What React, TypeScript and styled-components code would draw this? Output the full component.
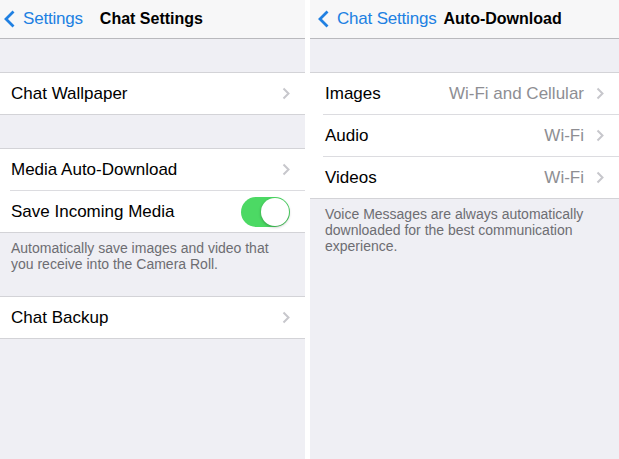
import styled, { createGlobalStyle } from 'styled-components';

const GlobalStyle = createGlobalStyle`
  html, body {
    margin: 0;
    padding: 0;
    background: #fff;
  }
  body {
    font-family: "Liberation Sans", Arial, sans-serif;
    -webkit-font-smoothing: antialiased;
  }
`;

const Screen = styled.div`
  display: flex;
  gap: 5px;
  width: 619px;
  height: 459px;
  background: #fff;
  overflow: hidden;
`;

const Panel = styled.section<{ $width?: number }>`
  flex: ${(p) => (p.$width ? `0 0 ${p.$width}px` : '1 1 auto')};
  display: flex;
  flex-direction: column;
  background: #efeff4;
  height: 100%;
`;

const NavBar = styled.header`
  height: 38px;
  flex-shrink: 0;
  display: flex;
  align-items: center;
  background: #f7f7f8;
  border-bottom: 1px solid #b9b9bd;
`;

const BackButton = styled.div<{ $left: number }>`
  display: flex;
  align-items: center;
  gap: 8px;
  padding-left: ${(p) => p.$left}px;
  color: #2080e2;
  font-size: 17px;
  letter-spacing: -0.2px;
`;

const NavTitle = styled.h1<{ $gap: number }>`
  margin: 0 0 0 ${(p) => p.$gap}px;
  font-size: 16px;
  font-weight: 700;
  color: #000;
`;

const Spacer = styled.div`
  height: 33px;
  flex-shrink: 0;
`;

const Group = styled.div`
  background: #fff;
  border-top: 1px solid #d3d3d7;
  border-bottom: 1px solid #d3d3d7;
`;

const Row = styled.div<{ $inset: number }>`
  height: 41px;
  display: flex;
  align-items: center;
  margin-left: ${(p) => p.$inset}px;
  padding-right: 15px;
  & + & {
    border-top: 1px solid #dcdce0;
  }
`;

const Label = styled.span<{ $pad: number }>`
  flex: 1;
  padding-left: ${(p) => p.$pad}px;
  font-size: 17px;
  color: #000;
`;

const Value = styled.span`
  font-size: 17px;
  color: #8e8e93;
  margin-right: 12px;
`;

const Footer = styled.p<{ $pad: number; $bottom: number }>`
  margin: 0;
  padding: 7px 12px ${(p) => p.$bottom}px ${(p) => p.$pad}px;
  font-size: 14px;
  line-height: 16px;
  color: #6d6d72;
`;

const Track = styled.div<{ $on: boolean }>`
  width: 49px;
  height: 30px;
  border-radius: 15px;
  background: ${(p) => (p.$on ? '#4cd964' : '#e5e5ea')};
  display: flex;
  align-items: center;
  justify-content: ${(p) => (p.$on ? 'flex-end' : 'flex-start')};
  padding: 0 1px;
  box-sizing: border-box;
`;

const Knob = styled.div`
  width: 28px;
  height: 28px;
  border-radius: 50%;
  background: #fff;
  box-shadow: 0 1px 3px rgba(0, 0, 0, 0.3);
`;

const Chevron = () => (
  <svg width="8" height="13" viewBox="0 0 8 13">
    <path d="M1.5 1.5 L6.5 6.5 L1.5 11.5" fill="none" stroke="#c7c7cc" strokeWidth="2" />
  </svg>
);

const BackArrow = () => (
  <svg width="11" height="18" viewBox="0 0 11 18">
    <path d="M9.5 1.5 L2 9 L9.5 16.5" fill="none" stroke="#2080e2" strokeWidth="2.8" />
  </svg>
);

const Switch = ({ on }: { on: boolean }) => (
  <Track $on={on}>
    <Knob />
  </Track>
);

const ChatSettings = () => (
  <Panel $width={305}>
    <NavBar>
      <BackButton $left={4}>
        <BackArrow />
        Settings
      </BackButton>
      <NavTitle $gap={17}>Chat Settings</NavTitle>
    </NavBar>
    <Spacer />
    <Group>
      <Row $inset={0}>
        <Label $pad={11}>Chat Wallpaper</Label>
        <Chevron />
      </Row>
    </Group>
    <Spacer />
    <Group>
      <Row $inset={10}>
        <Label $pad={1}>Media Auto-Download</Label>
        <Chevron />
      </Row>
      <Row $inset={10}>
        <Label $pad={1}>Save Incoming Media</Label>
        <Switch on />
      </Row>
    </Group>
    <Footer $pad={11} $bottom={24}>
      Automatically save images and video that you receive into the Camera Roll.
    </Footer>
    <Group>
      <Row $inset={0}>
        <Label $pad={11}>Chat Backup</Label>
        <Chevron />
      </Row>
    </Group>
  </Panel>
);

const downloads = [
  { label: 'Images', value: 'Wi-Fi and Cellular' },
  { label: 'Audio', value: 'Wi-Fi' },
  { label: 'Videos', value: 'Wi-Fi' }
];

const AutoDownload = () => (
  <Panel>
    <NavBar>
      <BackButton $left={8}>
        <BackArrow />
        Chat Settings
      </BackButton>
      <NavTitle $gap={7}>Auto-Download</NavTitle>
    </NavBar>
    <Spacer />
    <Group>
      {downloads.map((d) => (
        <Row $inset={13} key={d.label}>
          <Label $pad={2}>{d.label}</Label>
          <Value>{d.value}</Value>
          <Chevron />
        </Row>
      ))}
    </Group>
    <Footer $pad={15} $bottom={0}>
      Voice Messages are always automatically downloaded for the best communication experience.
    </Footer>
  </Panel>
);

export default function App() {
  return (
    <>
      <GlobalStyle />
      <Screen>
        <ChatSettings />
        <AutoDownload />
      </Screen>
    </>
  );
}
